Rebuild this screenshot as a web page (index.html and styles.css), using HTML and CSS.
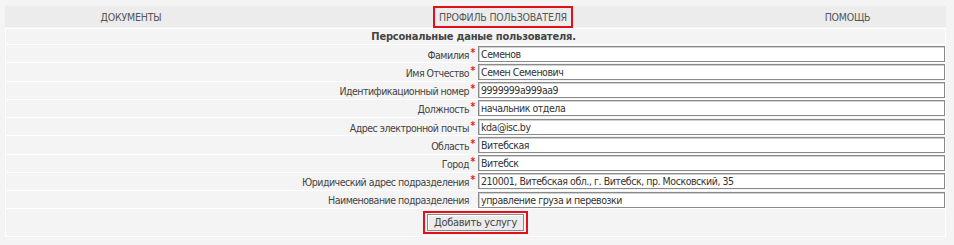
FILE: index.html
```html
<!DOCTYPE html>
<html lang="ru">
<head>
  <meta charset="UTF-8" />
  <title>Профиль пользователя</title>
  <link rel="stylesheet" href="styles.css">
</head>
<body>

  <!-- Top menu -->
  <nav class="menu">
    <div class="menu-item menu-docs"><span>ДОКУМЕНТЫ</span></div>
    <div class="menu-item menu-profile"><span class="marked">ПРОФИЛЬ ПОЛЬЗОВАТЕЛЯ</span></div>
    <div class="menu-item menu-help"><span>ПОМОЩЬ</span></div>
  </nav>

  <!-- Profile form -->
  <table class="profile">
    <tr>
      <th colspan="2" class="title">Персональные даные пользователя.</th>
    </tr>
    <tr>
      <td class="label">Фамилия<span class="req">*</span></td>
      <td class="field"><input type="text" value="Семенов"></td>
    </tr>
    <tr>
      <td class="label">Имя Отчество<span class="req">*</span></td>
      <td class="field"><input type="text" value="Семен Семенович"></td>
    </tr>
    <tr>
      <td class="label">Идентификационный номер<span class="req">*</span></td>
      <td class="field"><input type="text" value="9999999a999aa9"></td>
    </tr>
    <tr>
      <td class="label">Должность<span class="req">*</span></td>
      <td class="field"><input type="text" value="начальник отдела"></td>
    </tr>
    <tr>
      <td class="label">Адрес электронной почты<span class="req">*</span></td>
      <td class="field"><input type="text" value="kda@isc.by"></td>
    </tr>
    <tr>
      <td class="label">Область<span class="req">*</span></td>
      <td class="field"><input type="text" value="Витебская"></td>
    </tr>
    <tr>
      <td class="label">Город<span class="req">*</span></td>
      <td class="field"><input type="text" value="Витебск"></td>
    </tr>
    <tr>
      <td class="label">Юридический адрес подразделения<span class="req">*</span></td>
      <td class="field"><input type="text" value="210001, Витебская обл., г. Витебск, пр. Московский, 35"></td>
    </tr>
    <tr>
      <td class="label">Наименование подразделения<span class="req"></span></td>
      <td class="field"><input type="text" value="управление груза и перевозки"></td>
    </tr>
    <tr>
      <td colspan="2" class="actions">
        <span class="marked marked-btn"><button class="btn">Добавить услугу</button></span>
      </td>
    </tr>
  </table>

</body>
</html>
```

FILE: styles.css
```css
body {
  margin: 0;
  padding: 6px 0 0 5px;
  background-color: #f4f4f4;
  font-family: Tahoma, "DejaVu Sans", sans-serif;
  font-stretch: condensed;
  font-size: 10.5px;
  letter-spacing: -0.5px;
  color: #444;
}

.menu {
  display: flex;
  width: 941px;
  height: 21px;
  background-color: #ececec;
  color: #555;
  letter-spacing: -0.2px;
}

.menu-item {
  display: flex;
  align-items: center;
  justify-content: center;
}

.menu-docs {
  width: 252px;
}

.menu-profile {
  width: 492px;
}

.menu-help {
  flex: 1;
}

.marked {
  display: inline-block;
  border: 2px solid #e3101c;
  padding: 3px 4px;
}

.profile {
  width: 941px;
  margin-top: 1px;
  border-collapse: collapse;
  border: 1px solid #fff;
}

.profile td,
.profile th {
  border-top: 1px solid #fff;
  padding: 0;
}

.title {
  height: 15px;
  font-size: 11px;
  font-weight: bold;
  letter-spacing: -0.2px;
  color: #444;
  text-align: center;
  padding-right: 4px !important;
}

.label {
  width: 470px;
  height: 17.25px;
  text-align: right;
  white-space: nowrap;
  padding-right: 2px !important;
}

.req {
  display: inline-block;
  width: 7px;
  color: #e02020;
  font-weight: bold;
  vertical-align: 3px;
  font-size: 10px;
  text-align: center;
}

.field input {
  box-sizing: border-box;
  width: 467px;
  height: 16px;
  margin: 0;
  padding: 0 2px;
  border: 1px solid #8a8a8a;
  box-shadow: inset 1px 1px 0 #d0d0d0;
  background: #fff;
  font-family: inherit;
  font-stretch: condensed;
  font-size: 10.5px;
  letter-spacing: -0.45px;
  color: #333;
  display: block;
}

.actions {
  height: 24px;
  text-align: center;
  padding: 1px 0 2px 0 !important;
}

.marked-btn {
  padding: 1px 2px;
  line-height: 0;
}

.btn {
  height: 17px;
  padding: 0 6px;
  font-family: inherit;
  font-stretch: condensed;
  font-size: 11px;
  letter-spacing: -0.3px;
  color: #444;
  background-color: #ececec;
  border: 1px solid #8a8a8a;
  box-shadow: inset 1px 1px 0 #fff;
  line-height: 13px;
}
```
